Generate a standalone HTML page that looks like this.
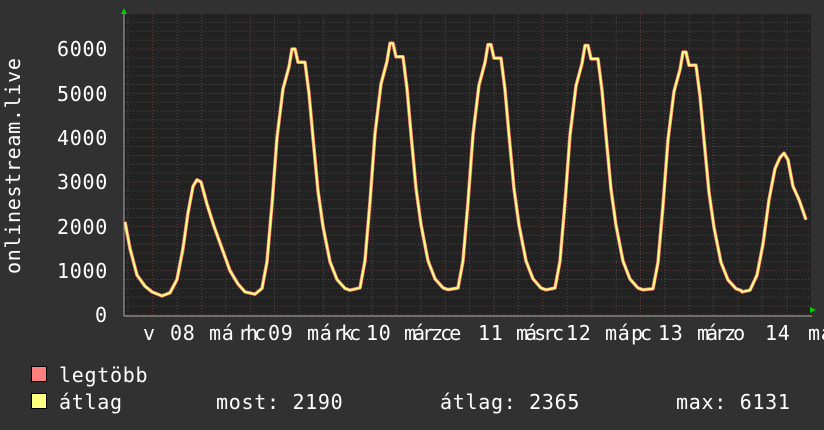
<!DOCTYPE html>
<html><head><meta charset="utf-8"><style>
html,body{margin:0;padding:0;background:#313131;width:824px;height:430px;overflow:hidden}
svg text{font-family:"DejaVu Sans Mono","Liberation Mono",monospace;font-size:20px;fill:#fff;letter-spacing:0.7px}
</style></head><body>
<svg id="s" width="824" height="430" xmlns="http://www.w3.org/2000/svg">
<rect x="0" y="0" width="824" height="430" fill="#313131"/>
<rect x="124" y="14" width="687" height="302" fill="#222"/>
<g id="grid"></g>
<path id="pmax" fill="none" stroke="#ff7f7f" stroke-width="3.5" stroke-linejoin="round"/>
<path id="pavg" fill="none" stroke="#ffff80" stroke-width="2" stroke-linejoin="round"/>
<line x1="124" y1="316" x2="812" y2="316" stroke="#aaa" stroke-width="1"/>
<line x1="124" y1="12" x2="124" y2="316" stroke="#aaa" stroke-width="1"/>
<polygon points="121,14 127,14 124,8" fill="#0c0"/>
<polygon points="810,307 810,313 816,310" fill="#0c0"/>
<text x="57" y="56">6000</text>
<text x="57" y="101">5000</text>
<text x="57" y="145">4000</text>
<text x="57" y="189">3000</text>
<text x="57" y="234">2000</text>
<text x="57" y="278">1000</text>
<text x="95" y="322">0</text>
<text transform="translate(20,274) rotate(-90)">onlinestream.live</text>
<g>
<text x="143" y="340">v</text><text x="170" y="340">08</text>
<text x="209" y="340">má</text><text x="238" y="340" style="letter-spacing:-4px">rhc</text><text x="268" y="340">09</text>
<text x="307" y="340">má</text><text x="333" y="340" style="letter-spacing:-4px">rkc</text><text x="366" y="340">10</text>
<text x="404" y="340" style="letter-spacing:-3px">márzce</text><text x="478" y="340">11</text>
<text x="516" y="340" style="letter-spacing:-3px">másrc</text><text x="566" y="340">12</text>
<text x="605" y="340">má</text><text x="631" y="340" style="letter-spacing:-3px">pc</text><text x="658" y="340">13</text>
<text x="697" y="340" style="letter-spacing:-3px">márzo</text><text x="765" y="340">14</text>
<text x="808" y="340">ma</text>
</g>
<rect x="31.5" y="366.5" width="15" height="15" fill="#ff7f7f" stroke="#000"/>
<rect x="31.5" y="393.5" width="15" height="15" fill="#ffff80" stroke="#000"/>
<text x="59" y="382">legtöbb</text>
<text x="59" y="409">átlag</text>
<text x="216" y="409">most: 2190</text>
<text x="440" y="409">átlag: 2365</text>
<text x="676" y="409">max: 6131</text>
</svg>
<script>
var g=document.getElementById('grid'),h='';
for(var v=0;v<=6600;v+=200){var y=315-v*0.04433;if(y<14)break;
 h+='<line x1="124" x2="810" y1="'+y+'" y2="'+y+'" stroke="'+(v%1000==0?'#6a3a3a':'#4a4a4a')+'" stroke-dasharray="1,2"/>';}
for(var i=-6;i<30;i++){var x=152.5+i*24.4;if(x<125||x>810)continue;
 h+='<line y1="14" y2="316" x1="'+x+'" x2="'+x+'" stroke="'+(i%4==0?'#6a3a3a':'#4a4a4a')+'" stroke-dasharray="1,2"/>';}
g.innerHTML=h;
var shape=[[-40,470],[-33,600],[-28,1200],[-23,2500],[-18,4000],[-12,5100],[-6,5600],[-3,6000],[0,6000],[3,5700],[10,5700],[14,5000],[18,4000],[23,2800],[28,2000],[35,1200],[42,800],[50,600],[55,560]];
var peaks=[[295,6000,470],[393,6130,560],[491,6100,570],[588,6080,570],[686,5930,540]];
var pts=[[125,2100],[130,1500],[137,900],[145,650],[152,520],[162,430],[170,500],[177,800],[183,1500],[188,2300],[193,2900],[197,3050],[201,3000],[207,2500],[214,2000],[222,1500],[230,1000],[238,700],[245,520],[255,470]];
peaks.forEach(function(p){var sc=p[1]/6000;shape.forEach(function(s,j){if(j==0)return;pts.push([p[0]+s[0],j<9?Math.max(s[1]*sc,p[2]):s[1]*sc]);});});
pts.push([742,520],[750,560],[757,900],[763,1600],[769,2600],[775,3300],[780,3550],[784,3650],[788,3500],[793,2900],[799,2600],[806,2150]);
var d='';pts.forEach(function(p,i){d+=(i?'L':'M')+p[0].toFixed(1)+' '+(315-p[1]*0.04433).toFixed(1);});
document.getElementById('pmax').setAttribute('d',d);
document.getElementById('pavg').setAttribute('d',d);
</script>
</body></html>
